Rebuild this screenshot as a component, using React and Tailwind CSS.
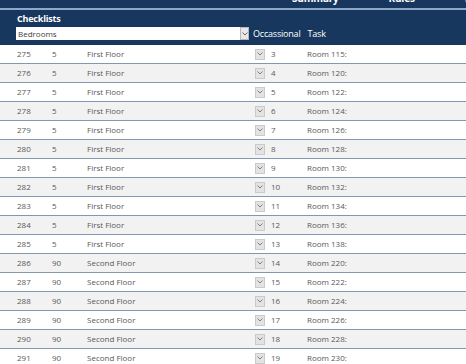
import React from "react";

const rows = [
  [275, 5, "First Floor", 3, "Room 115:"],
  [276, 5, "First Floor", 4, "Room 120:"],
  [277, 5, "First Floor", 5, "Room 122:"],
  [278, 5, "First Floor", 6, "Room 124:"],
  [279, 5, "First Floor", 7, "Room 126:"],
  [280, 5, "First Floor", 8, "Room 128:"],
  [281, 5, "First Floor", 9, "Room 130:"],
  [282, 5, "First Floor", 10, "Room 132:"],
  [283, 5, "First Floor", 11, "Room 134:"],
  [284, 5, "First Floor", 12, "Room 136:"],
  [285, 5, "First Floor", 13, "Room 138:"],
  [286, 90, "Second Floor", 14, "Room 220:"],
  [287, 90, "Second Floor", 15, "Room 222:"],
  [288, 90, "Second Floor", 16, "Room 224:"],
  [289, 90, "Second Floor", 17, "Room 226:"],
  [290, 90, "Second Floor", 18, "Room 228:"],
  [291, 90, "Second Floor", 19, "Room 230:"],
];

// tiny chevron used in the dropdown buttons
const Chevron = ({ color = "#6b6b6b" }) => (
  <svg width="6" height="4" viewBox="0 0 6 4">
    <path d="M0.5 0.5 L3 3 L5.5 0.5" fill="none" stroke={color} strokeWidth="1" />
  </svg>
);

export default function App() {
  return (
    <div className="w-[466px] h-[364px] overflow-hidden bg-white" style={{ fontFamily: '"Open Sans", sans-serif' }}>
      {/* top strip, mostly cut off */}
      <div className="h-[8px] bg-[#17375e] overflow-hidden">
        <div className="flex text-white font-bold text-[10px] leading-[12px] -mt-[8px] tracking-[-0.2px]">
          <span className="ml-[292px]">Summary</span>
          <span className="ml-[50px]">Rules</span>
          <span className="ml-[50px]">E</span>
        </div>
      </div>
      <div className="h-[2px] bg-[#8ea9c8]" />

      {/* header */}
      <div className="h-[35px] bg-[#17375e] pl-[17px] pt-[2px]">
        <div className="text-white font-bold text-[9px] leading-[13px] tracking-[-0.2px]">Checklists</div>
        <div className="flex items-center mt-[2px] -ml-[1px]">
          <div className="w-[224px] h-[13px] bg-white flex items-center pl-[2px] text-[8px] text-[#404040]">Bedrooms</div>
          <div className="w-[9px] h-[13px] bg-[#e8e8e8] border border-[#b8b8b8] flex items-center justify-center">
            <Chevron />
          </div>
          <span className="ml-[4px] text-white text-[9px] tracking-[-0.2px]">Occassional</span>
          <span className="ml-[7px] text-white text-[9px] tracking-[-0.2px]">Task</span>
        </div>
      </div>

      {/* rows */}
      <div>
        {rows.map((r, i) => (
          <div
            key={r[0]}
            className={`h-[19px] flex items-center border-b border-[#8497b0] text-[8px] text-[#595959] ${i % 2 ? "bg-[#f2f2f2]" : "bg-white"}`}
          >
            <span className="w-[35px] pl-[17px] box-content">{r[0]}</span>
            <span className="w-[35px]">{r[1]}</span>
            <span className="w-[168px]">{r[2]}</span>
            <span className="w-[10px] h-[11px] bg-[#e3e3e3] border border-[#cacaca] flex items-center justify-center">
              <Chevron color="#808080" />
            </span>
            <span className="w-[42px] pl-[6px]">{r[3]}</span>
            <span>{r[4]}</span>
          </div>
        ))}
      </div>
    </div>
  );
}
